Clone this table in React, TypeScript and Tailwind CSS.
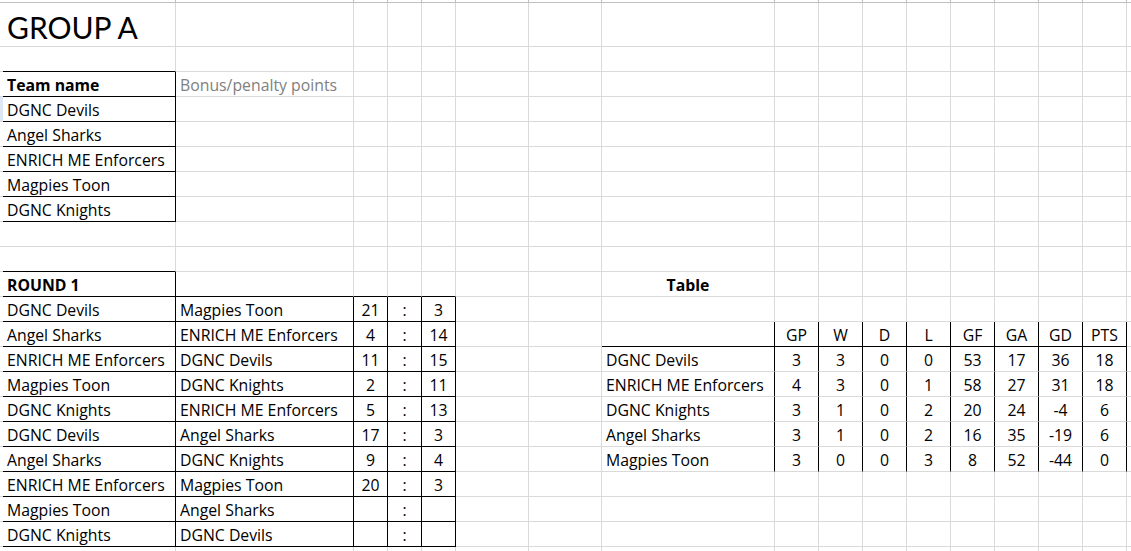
type Cell = { t: string; bold?: boolean; center?: boolean; gray?: boolean; big?: boolean };

// column 0 is the row-header stub, 1..17 are A..Q
const teams = ["DGNC Devils", "Angel Sharks", "ENRICH ME Enforcers", "Magpies Toon", "DGNC Knights"];

const matches: [string, string, string, string][] = [
  ["DGNC Devils", "Magpies Toon", "21", "3"],
  ["Angel Sharks", "ENRICH ME Enforcers", "4", "14"],
  ["ENRICH ME Enforcers", "DGNC Devils", "11", "15"],
  ["Magpies Toon", "DGNC Knights", "2", "11"],
  ["DGNC Knights", "ENRICH ME Enforcers", "5", "13"],
  ["DGNC Devils", "Angel Sharks", "17", "3"],
  ["Angel Sharks", "DGNC Knights", "9", "4"],
  ["ENRICH ME Enforcers", "Magpies Toon", "20", "3"],
  ["Magpies Toon", "Angel Sharks", "", ""],
  ["DGNC Knights", "DGNC Devils", "", ""],
];

const standings: [string, ...string[]][] = [
  ["DGNC Devils", "3", "3", "0", "0", "53", "17", "36", "18"],
  ["ENRICH ME Enforcers", "4", "3", "0", "1", "58", "27", "31", "18"],
  ["DGNC Knights", "3", "1", "0", "2", "20", "24", "-4", "6"],
  ["Angel Sharks", "3", "1", "0", "2", "16", "35", "-19", "6"],
  ["Magpies Toon", "3", "0", "0", "3", "8", "52", "-44", "0"],
];

const headers = ["GP", "W", "D", "L", "GF", "GA", "GD", "PTS"];

const cells: Record<string, Cell> = {};
const put = (r: number, c: number, cell: Cell) => (cells[`${r},${c}`] = cell);

put(1, 1, { t: "GROUP A", big: true });
put(3, 1, { t: "Team name", bold: true });
put(3, 2, { t: "Bonus/penalty points", gray: true });
teams.forEach((t, i) => put(4 + i, 1, { t }));

put(11, 1, { t: "ROUND 1", bold: true });
matches.forEach(([h, a, hs, as], i) => {
  const r = 12 + i;
  put(r, 1, { t: h });
  put(r, 2, { t: a });
  put(r, 3, { t: hs, center: true });
  put(r, 4, { t: ":", center: true });
  put(r, 5, { t: as, center: true });
});

put(11, 8, { t: "Table", bold: true, center: true });
headers.forEach((h, i) => put(13, 9 + i, { t: h, center: true }));
standings.forEach((row, i) => {
  put(14 + i, 8, { t: row[0] });
  row.slice(1).forEach((v, j) => put(14 + i, 9 + j, { t: v, center: true }));
});

const inRange = (r: number, a: number, b: number) => r >= a && r <= b;

function blackRight(r: number, c: number) {
  if (c <= 1) return inRange(r, 3, 8) || inRange(r, 11, 21);
  if (c >= 2 && c <= 5) return inRange(r, 12, 21);
  if (c >= 8 && c <= 16) return inRange(r, 13, 18);
  return false;
}

function blackBottom(r: number, c: number) {
  if (c === 1) return inRange(r, 2, 8) || inRange(r, 10, 21);
  if (c >= 2 && c <= 5) return inRange(r, 11, 21);
  if (c >= 8 && c <= 16) return r === 13;
  return false;
}

const ROWS = 23;
const COLS = 18;

export default function App() {
  const grid = [];
  for (let r = 0; r < ROWS; r++) {
    for (let c = 0; c < COLS; c++) {
      const cell = cells[`${r},${c}`];
      const header = r === 0;
      const right = header ? "border-r-[#bfbfbf]" : blackRight(r, c) ? "border-r-black" : "border-r-[#dadada]";
      const bottom = header ? "border-b-[#bfbfbf]" : blackBottom(r, c) ? "border-b-black" : "border-b-[#dadada]";
      const stubBg = c === 0 && r === 4 ? "bg-[#dce8f6]" : "bg-white";
      grid.push(
        <div
          key={`${r}-${c}`}
          className={`flex min-w-0 overflow-visible whitespace-nowrap border-r border-b ${right} ${bottom} ${stubBg} ${
            cell?.center ? "justify-center" : "justify-start pl-[4px]"
          } ${cell?.big ? "pt-[8px]" : "pt-[2px]"}`}
        >
          {cell && (
            <span
              className={
                cell.big
                  ? "font-[family-name:Lato,sans-serif] text-[30px] leading-[32px] text-black"
                  : `text-[15.8px] leading-[22px] ${cell.bold ? "font-bold" : ""} ${
                      cell.gray ? "text-[#808080]" : "text-black"
                    }`
              }
            >
              {cell.t}
            </span>
          )}
        </div>
      );
    }
  }

  return (
    <div className="h-screen w-screen overflow-hidden bg-white font-[family-name:'Open_Sans',sans-serif]">
      <div className="grid grid-cols-[3px_173px_178px_34px_34px_34px_73px_73px_173px_repeat(9,44px)] grid-rows-[3px_44px_repeat(21,25px)]">
        {grid}
      </div>
    </div>
  );
}
